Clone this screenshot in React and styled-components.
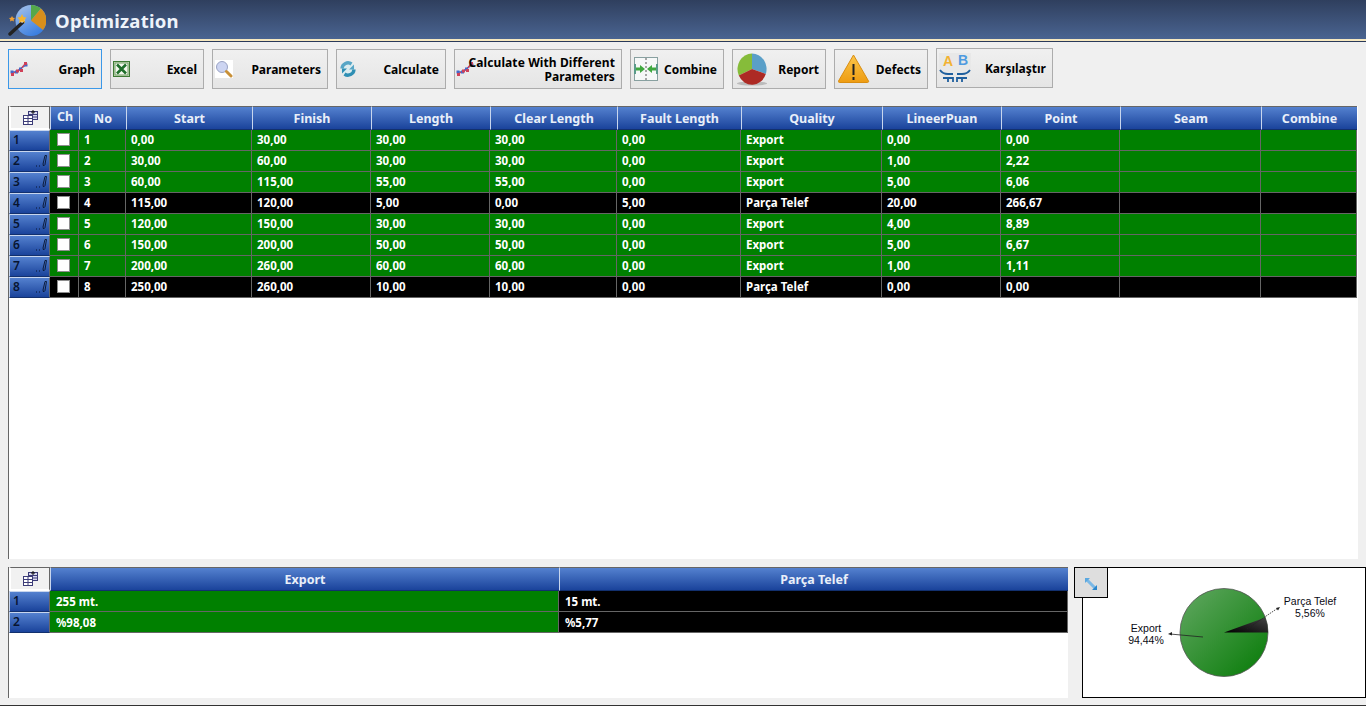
import React from 'react';
import styled, { createGlobalStyle } from 'styled-components';

const GlobalStyle = createGlobalStyle`
  html, body {
    margin: 0;
    padding: 0;
    background: #f0f0f0;
    overflow: hidden;
  }
  * { box-sizing: border-box; }
`;

const Page = styled.div`
  width: 1366px;
  height: 706px;
  display: flex;
  flex-direction: column;
  font-family: "Noto Sans", Tahoma, sans-serif;
  background: #f0f0f0;
  border-bottom: 1px solid #333;
`;

const TitleBar = styled.div`
  height: 42px;
  flex: none;
  display: flex;
  align-items: center;
  gap: 9px;
  padding: 0 0 1px 8px;
  background: linear-gradient(#2f3f5e, #4a6491 93%);
  box-shadow: inset 0 -1px 0 #2a3a5a, inset 0 -3px 0 #f6e8c0;
`;

const Title = styled.h1`
  margin: 0;
  padding-bottom: 1px;
  font-size: 18.5px;
  font-weight: 700;
  color: #eef3fa;
  letter-spacing: 0.25px;
`;

const Toolbar = styled.div`
  height: 64px;
  flex: none;
  display: flex;
  align-items: flex-start;
  gap: 8px;
  padding: 7px 0 0 8px;
`;

const ToolButton = styled.button`
  width: ${({ $w }) => $w}px;
  height: 40px;
  display: flex;
  align-items: center;
  justify-content: space-between;
  padding: 0 6px 0 1px;
  border: 1px solid ${({ $active }) => ($active ? '#3b98e8' : '#acacac')};
  background: linear-gradient(#f0f0f0, #e5e5e5);
  font-family: inherit;
  font-size: 12px;
  font-weight: 700;
  line-height: 14px;
  color: #000;
  text-align: right;
  flex: none;
  margin-top: ${({ $up }) => ($up ? '-1px' : '0')};
`;

const ButtonLabel = styled.span`
  padding-top: 2px;
`;

const WrapLabel = styled.span`
  margin-left: -11px;
  padding-top: 2px;
  flex: 1;
  letter-spacing: 0.1px;
`;

const GridArea = styled.div`
  background: #fff;
  flex: none;
  display: flex;
  flex-direction: column;
  border-left: 1px solid #666;
`;

const MainArea = styled(GridArea)`
  width: 1350px;
  height: 453px;
  margin-left: 8px;
`;

const GridRow = styled.div`
  display: grid;
  grid-template-columns: ${({ $cols }) => $cols};
  height: ${({ $h }) => $h}px;
  flex: none;
`;

const Corner = styled.div`
  background: #f1f1f1;
  border: 2px solid #fff;
  border-top: 1px solid #666;
  border-right: 1px solid #666;
  display: flex;
  align-items: center;
  justify-content: center;
`;

const HeadCell = styled.div`
  display: flex;
  align-items: center;
  justify-content: center;
  background: linear-gradient(#5481cf, #1a439b);
  border-top: 1px solid #666;
  border-left: 1px solid #c8d6ee;
  border-bottom: 1px solid #12306e;
  color: #e9eff9;
  font-size: 12.5px;
  font-weight: 700;
  padding-bottom: ${({ $raise }) => ($raise ? '3px' : '0')};
`;

const RowHead = styled.div`
  display: flex;
  align-items: center;
  justify-content: space-between;
  padding: 0 2px 2px 3px;
  background: linear-gradient(#5481cf, #1a439b);
  border: 1px solid #c8d6ee;
  border-bottom-color: #12306e;
  border-right-color: #666;
  font-size: 12px;
  font-weight: 600;
  color: #081530;
`;

const Cell = styled.div`
  display: flex;
  align-items: center;
  padding: 0 0 2px 5px;
  background: ${({ $black }) => ($black ? '#000' : '#008000')};
  border-right: 1px solid #666;
  border-bottom: 1px solid #666;
  color: #fff;
  font-size: 11.5px;
  font-weight: 700;
  white-space: nowrap;
`;

const SummaryCell = styled(Cell)`
  padding: 0 0 0 6px;
`;

const CheckCell = styled(Cell)`
  justify-content: center;
  padding: 0 2px 2px 0;
`;

const CheckBox = styled.span`
  width: 13px;
  height: 13px;
  background: #fff;
  border: 1px solid #8e8e8e;
`;

const BottomArea = styled.div`
  flex: none;
  height: 132px;
  margin-top: 8px;
  display: flex;
  padding-left: 8px;
`;

const SummaryGrid = styled(GridArea)`
  width: 1060px;
  height: 131px;
`;

const ChartBox = styled.div`
  position: relative;
  width: 284px;
  height: 131px;
  margin-left: 14px;
  background: #fff;
  border: 1px solid #000;
  flex: none;
`;

const ExpandButton = styled.div`
  position: absolute;
  left: -9px;
  top: -1px;
  width: 34px;
  height: 31px;
  background: #dedede;
  border: 1px solid #000;
  display: flex;
  align-items: center;
  justify-content: center;
`;

const PieLabel = styled.div`
  position: absolute;
  left: ${({ $x }) => $x}px;
  top: ${({ $y }) => $y}px;
  width: 70px;
  text-align: center;
  font-family: "Liberation Sans", Arial, sans-serif;
  font-size: 10.5px;
  line-height: 12px;
  color: #0a0a14;
`;

const PieSvg = styled.svg`
  position: absolute;
  left: 0;
  top: 0;
`;

const IconText = styled.text`
  font-family: "Liberation Sans", Arial, sans-serif;
  font-size: 14px;
  font-weight: 700;
`;

const GridIcon = () => (
  <svg width="15" height="15" viewBox="0 0 15 15">
    <rect x="5.5" y="1.5" width="9" height="8" fill="#d8d8f0" stroke="#3c3c78" />
    <path d="M5.5 4.5h9M5.5 7h9" stroke="#3c3c78" />
    <rect x="0.5" y="5.5" width="9" height="9" fill="#fff" stroke="#3c3c78" />
    <path d="M0.5 8.5h9M0.5 11.500h9M5 5.500v9" stroke="#3c3c78" />
    <path d="M10 0v4M8 2h4" stroke="#111" />
  </svg>
);

const PencilIcon = () => (
  <svg width="12" height="13" viewBox="0 0 12 13">
    <path d="M8 10L10 1.500h1.500L10 10.500 8.500 12z" fill="none" stroke="#081530" strokeWidth="0.9" />
    <path d="M1 12h1M4 12h1" stroke="#081530" />
  </svg>
);

const GraphIcon = () => (
  <svg width="18" height="18" viewBox="0 0 18 18">
    <path d="M2 12L6 12 10 9 16 5" fill="none" stroke="#4468c8" strokeWidth="1.300" />
    <path d="M2 14L7 11 10 10 15 4" fill="none" stroke="#d04058" strokeWidth="1.300" />
    <path d="M0.500 10.500h3v3h-3zM5 10.500h3v3H5zM9 7.500h3v3H9zM14.500 3.500h3v3h-3z" fill="#4468c8" />
    <path d="M1 13h3v3H1zM6 9.500h3v3H6zM10 9h3v3h-3zM14 2h3v3h-3z" fill="#d04058" />
  </svg>
);

const ExcelIcon = () => (
  <svg width="18" height="18" viewBox="0 0 18 18" style={{ marginLeft: 1 }}>
    <rect x="0.5" y="1.500" width="16" height="15" fill="#cfe0c2" stroke="#3f7a35" />
    <rect x="2" y="3" width="13" height="12" fill="#f4f8ee" stroke="#6e9c62" />
    <path d="M4 4.500l9 9M13 4.500l-9 9" stroke="#1f6e2a" strokeWidth="2.600" />
  </svg>
);

const SearchIcon = () => (
  <svg width="18" height="18" viewBox="0 0 18 18" style={{ background: '#fff', marginLeft: 1 }}>
    <circle cx="7" cy="7" r="5.500" fill="#cdd5f2" stroke="#9aa3c4" />
    <path d="M11.500 11.500l4.500 4.500" stroke="#c89038" strokeWidth="3" strokeLinecap="round" />
  </svg>
);

const RefreshIcon = () => (
  <svg width="18" height="18" viewBox="0 0 18 18" style={{ marginLeft: 1 }}>
    <circle cx="9" cy="9" r="7" fill="#dcecef" />
    <path d="M3 8.500A6 6 0 0 1 12.500 4" fill="none" stroke="#58a6c6" strokeWidth="3.400" />
    <path d="M15 4.500v5h-5z" fill="#58a6c6" />
    <path d="M15 9.500A6 6 0 0 1 5.500 14" fill="none" stroke="#2f8fb4" strokeWidth="3.400" />
    <path d="M3 13.500v-5h5z" fill="#2f8fb4" />
  </svg>
);

const CombineIcon = () => (
  <svg width="24" height="24" viewBox="0 0 24 24" style={{ marginLeft: 2 }}>
    <rect x="0.5" y="0.500" width="23" height="23" fill="#f6f8f8" stroke="#88a0a0" />
    <path d="M12 1v22" stroke="#555" strokeDasharray="2 2" />
    <path d="M1 7v10M23 7v10" stroke="#5a9a8a" strokeWidth="2" />
    <path d="M2 10.500h4V8l5 4-5 4v-2.500H2zM22 10.500h-4V8l-5 4 5 4v-2.500h4z" fill="#3fa83f" />
  </svg>
);

const ReportIcon = () => (
  <svg width="32" height="33" viewBox="0 0 32 33" style={{ marginLeft: 3 }}>
    <ellipse cx="15" cy="30.500" rx="15" ry="2" fill="#bbb" />
    <path d="M15 16V0.500A14.500 15.500 0 0 0 1.800 22.500z" fill="#86bc3a" />
    <path d="M15 16V0.500A14.500 15.500 0 0 1 28.800 21z" fill="#5a9fc8" />
    <path d="M15 16L1.800 22.500A14.500 15.500 0 0 0 28.800 21z" fill="#ad2a24" />
  </svg>
);

const WarningIcon = () => (
  <svg width="32" height="30" viewBox="0 0 32 30" style={{ marginLeft: 2 }}>
    <defs>
      <linearGradient id="warnFill" x1="0" y1="0" x2="0" y2="1">
        <stop offset="0" stopColor="#fbc64a" />
        <stop offset="1" stopColor="#ee9c12" />
      </linearGradient>
    </defs>
    <path d="M15.500 1L30.500 27a1 1 0 0 1-1 1.500H1.500a1 1 0 0 1-1-1.500z" fill="url(#warnFill)" stroke="#d98d10" />
    <rect x="14.500" y="10" width="2" height="11" fill="#222" />
    <rect x="14.500" y="23" width="2" height="3" fill="#222" />
  </svg>
);

const CompareIcon = () => (
  <svg width="32" height="30" viewBox="0 0 32 30" style={{ background: '#e8e8e8', marginLeft: 1 }}>
    <IconText x="4" y="13" fill="#f2b233">A</IconText>
    <IconText x="19" y="12" fill="#4f9be0">B</IconText>
    <path d="M1 17c2 3 5 4 8 4h5M31 17c-2 3-5 4-8 4h-5M4 25h10v4M28 25H18v4M9 25v4M23 25v4" fill="none" stroke="#1f5f9e" strokeWidth="1.800" />
  </svg>
);

const ExpandIcon = () => (
  <svg width="14" height="14" viewBox="0 0 14 14" style={{ marginTop: 2, marginRight: 1 }}>
    <path d="M3 3l8 8" stroke="#7ab8e6" strokeWidth="3" />
    <path d="M1 1h5L1 6z" fill="#5aa8e0" />
    <path d="M13 13H8l5-5z" fill="#2a86cc" />
  </svg>
);

const LogoIcon = () => (
  <svg width="38" height="36" viewBox="0 0 38 36">
    <defs>
      <linearGradient id="logoBlue" x1="0" y1="0" x2="0.6" y2="1">
        <stop offset="0" stopColor="#a8c4ea" />
        <stop offset="1" stopColor="#3a7ee0" />
      </linearGradient>
    </defs>
    <circle cx="23" cy="17.500" r="15.500" fill="url(#logoBlue)" />
    <path d="M23 17.500V2A15.500 15.500 0 0 1 33 5.500z" fill="#55a84a" />
    <path d="M23 17.500L33 5.500A15.500 15.500 0 0 1 35 27z" fill="#d88f1c" />
    <path d="M2 31L15 19" stroke="#222" strokeWidth="3.400" strokeLinecap="round" />
    <path d="M13 19l3-3" stroke="#f4f4f4" strokeWidth="3" />
    <path d="M14 11l1.500 3 3 .5-2 2.500.5 3-3-1.500-3 1.500.5-3-2-2.500 3-.5z" fill="#f2b430" />
    <path d="M4 13l1 1.700 2 .3-1.400 1.500.3 2-1.900-1-1.900 1 .3-2L1 15l2-.3z" fill="#f2a030" />
  </svg>
);

const mainCols = '41px 29px 47px 126px 119px 119px 127px 124px 141px 119px 119px 141px 96px';
const mainHeads = ['Ch', 'No', 'Start', 'Finish', 'Length', 'Clear Length', 'Fault Length', 'Quality', 'LineerPuan', 'Point', 'Seam', 'Combine'];
const summaryCols = '41px 509px 509px';

const rows = [
  ['1', '0,00', '30,00', '30,00', '30,00', '0,00', 'Export', '0,00', '0,00'],
  ['2', '30,00', '60,00', '30,00', '30,00', '0,00', 'Export', '1,00', '2,22'],
  ['3', '60,00', '115,00', '55,00', '55,00', '0,00', 'Export', '5,00', '6,06'],
  ['4', '115,00', '120,00', '5,00', '0,00', '5,00', 'Parça Telef', '20,00', '266,67'],
  ['5', '120,00', '150,00', '30,00', '30,00', '0,00', 'Export', '4,00', '8,89'],
  ['6', '150,00', '200,00', '50,00', '50,00', '0,00', 'Export', '5,00', '6,67'],
  ['7', '200,00', '260,00', '60,00', '60,00', '0,00', 'Export', '1,00', '1,11'],
  ['8', '250,00', '260,00', '10,00', '10,00', '0,00', 'Parça Telef', '0,00', '0,00'],
];

const buttons = [
  { label: 'Graph', w: 94, icon: <GraphIcon />, active: true },
  { label: 'Excel', w: 94, icon: <ExcelIcon /> },
  { label: 'Parameters', w: 116, icon: <SearchIcon /> },
  { label: 'Calculate', w: 110, icon: <RefreshIcon /> },
  { label: 'Calculate With Different Parameters', w: 168, icon: <GraphIcon />, wrap: true },
  { label: 'Combine', w: 94, icon: <CombineIcon /> },
  { label: 'Report', w: 94, icon: <ReportIcon /> },
  { label: 'Defects', w: 94, icon: <WarningIcon /> },
  { label: 'Karşılaştır', w: 117, icon: <CompareIcon />, up: true },
];

export default function App() {
  return (
    <Page>
      <GlobalStyle />
      <TitleBar>
        <LogoIcon />
        <Title>Optimization</Title>
      </TitleBar>

      <Toolbar>
        {buttons.map((b) => (
          <ToolButton key={b.label} $w={b.w} $active={b.active} $up={b.up}>
            {b.icon}
            {b.wrap ? <WrapLabel>{b.label}</WrapLabel> : <ButtonLabel>{b.label}</ButtonLabel>}
          </ToolButton>
        ))}
      </Toolbar>

      <MainArea>
        <GridRow $cols={mainCols} $h={24}>
          <Corner><GridIcon /></Corner>
          {mainHeads.map((h) => (
            <HeadCell key={h} $raise={h === 'Ch'}>{h}</HeadCell>
          ))}
        </GridRow>
        {rows.map((r) => {
          const black = r[6] === 'Parça Telef';
          return (
            <GridRow key={r[0]} $cols={mainCols} $h={21}>
              <RowHead>
                {r[0]}
                {r[0] !== '1' && <PencilIcon />}
              </RowHead>
              <CheckCell $black={black}><CheckBox /></CheckCell>
              {r.map((v, i) => (
                <Cell key={i} $black={black}>{v}</Cell>
              ))}
              <Cell $black={black} />
              <Cell $black={black} />
            </GridRow>
          );
        })}
      </MainArea>

      <BottomArea>
        <SummaryGrid>
          <GridRow $cols={summaryCols} $h={24}>
            <Corner><GridIcon /></Corner>
            <HeadCell>Export</HeadCell>
            <HeadCell>Parça Telef</HeadCell>
          </GridRow>
          <GridRow $cols={summaryCols} $h={21}>
            <RowHead>1</RowHead>
            <SummaryCell>255 mt.</SummaryCell>
            <SummaryCell $black>15 mt.</SummaryCell>
          </GridRow>
          <GridRow $cols={summaryCols} $h={21}>
            <RowHead>2</RowHead>
            <SummaryCell>%98,08</SummaryCell>
            <SummaryCell $black>%5,77</SummaryCell>
          </GridRow>
        </SummaryGrid>

        <ChartBox>
          <ExpandButton><ExpandIcon /></ExpandButton>
          <PieSvg width="282" height="129" viewBox="0 0 282 129">
            <defs>
              <linearGradient id="pieGreen" x1="0" y1="0" x2="1" y2="1">
                <stop offset="0" stopColor="#62a862" />
                <stop offset="1" stopColor="#067a06" />
              </linearGradient>
              <linearGradient id="pieBlack" x1="0" y1="1" x2="1" y2="0">
                <stop offset="0" stopColor="#000" />
                <stop offset="1" stopColor="#444" />
              </linearGradient>
            </defs>
            <circle cx="141" cy="64.500" r="44" fill="url(#pieGreen)" stroke="#555" strokeWidth="0.8" />
            <path d="M141 64.500L182.300 49.500A44 44 0 0 1 185 64.500z" fill="url(#pieBlack)" />
            <path d="M164 61L195 40" stroke="#222" strokeWidth="0.8" strokeDasharray="1.500 1" />
            <path d="M197 39l-4 1 2 2.500z" fill="#222" />
            <path d="M120 69L87 66" stroke="#222" strokeWidth="0.8" />
            <path d="M85 66l4-2v3.500z" fill="#222" />
          </PieSvg>
          <PieLabel $x={192} $y={27}>Parça Telef<br />5,56%</PieLabel>
          <PieLabel $x={28} $y={54}>Export<br />94,44%</PieLabel>
        </ChartBox>
      </BottomArea>
    </Page>
  );
}
